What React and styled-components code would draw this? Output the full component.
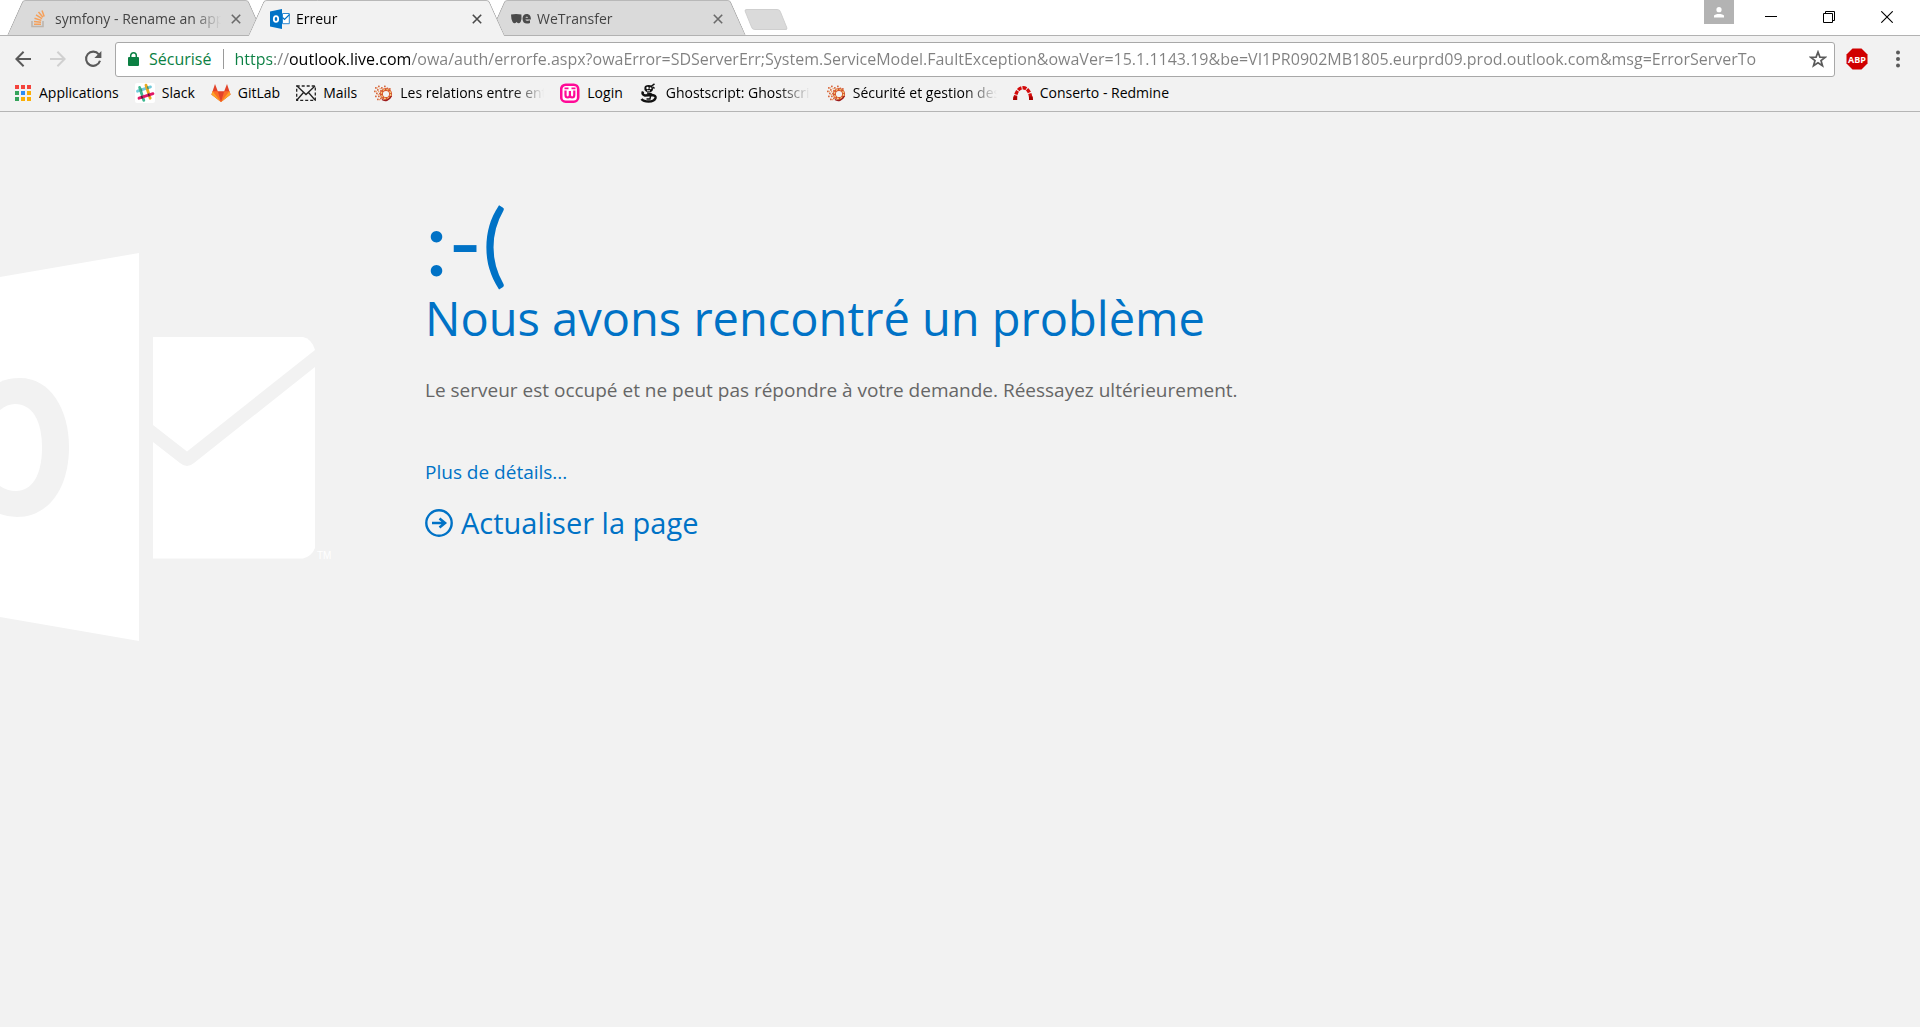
import React from "react";
import styled, { createGlobalStyle, css } from "styled-components";

const GlobalStyle = createGlobalStyle`
  *, *::before, *::after { box-sizing: border-box; }
  body {
    margin: 0;
    background: #f2f2f2;
    font-family: "Open Sans", "Noto Sans", sans-serif;
    color: #000;
  }
  button { font: inherit; color: inherit; border: 0; padding: 0; background: none; }
  svg { display: block; flex: none; }
`;

const Window = styled.div`
  display: flex;
  flex-direction: column;
  min-height: 100vh;
`;

/* ---------- Tab strip ---------- */

const TabStrip = styled.header`
  display: flex;
  align-items: flex-start;
  height: 36px;
  padding-left: 7px;
  background: #fff;
  border-bottom: 1px solid #b2b2b2;
`;

const TabList = styled.div`
  display: flex;
  flex: 1;
  min-width: 0;
`;

const tabSide = css`
  content: "";
  position: absolute;
  top: 0;
  bottom: 0;
  z-index: -1;
  background: ${(p) => (p.$active ? "#f2f2f2" : "#dadada")};
  border-top: 1px solid #b8b8b8;
`;

const Tab = styled.div`
  position: relative;
  z-index: ${(p) => (p.$active ? 2 : 1)};
  isolation: isolate;
  display: flex;
  align-items: center;
  flex: 0 1 257px;
  min-width: 0;
  height: ${(p) => (p.$active ? 36 : 35)}px;
  margin-right: -16px;
  padding: 2px 23px 0 22px;
  color: ${(p) => (p.$active ? "#000" : "#444")};

  &::before {
    ${tabSide}
    left: 8px;
    right: 30%;
    border-left: 1px solid #a6a6a6;
    border-top-left-radius: 3px;
    transform: skewX(-24deg);
  }
  &::after {
    ${tabSide}
    left: 30%;
    right: 8px;
    border-right: 1px solid #a6a6a6;
    border-top-right-radius: 3px;
    transform: skewX(24deg);
  }
`;

const TabTitle = styled.span`
  flex: 1;
  min-width: 0;
  margin: 0 10px 0 6px;
  overflow: hidden;
  white-space: nowrap;
  font-size: 14px;
  line-height: 20px;
  mask-image: linear-gradient(to right, #000 calc(100% - 28px), transparent);
`;

const TabClose = styled.button`
  display: grid;
  place-items: center;
  width: 10px;
  height: 20px;
  color: ${(p) => (p.$active ? "#4a4a4a" : "#6a6a6a")};
`;

const NewTab = styled.button`
  flex: none;
  width: 36px;
  height: 21px;
  margin: 9px 0 0 18px;
  background: #dadada;
  border: 1px solid #cfcfcf;
  border-radius: 3px;
  transform: skewX(22deg);
`;

const WindowControls = styled.div`
  display: flex;
  align-items: flex-start;
  padding-right: 4px;
`;

const ProfileButton = styled.button`
  display: grid;
  place-items: center;
  width: 30px;
  height: 24px;
  margin-right: 8px;
  background: #b3b3b3;
`;

const WindowButton = styled.button`
  display: grid;
  place-items: center;
  width: 58px;
  height: 34px;
`;

/* ---------- Toolbar ---------- */

const Toolbar = styled.nav`
  display: flex;
  align-items: center;
  height: 45px;
  padding: 1px 11px 0 12px;
`;

const ToolButton = styled.button`
  display: grid;
  place-items: center;
  width: 22px;
  height: 28px;
  margin-left: ${(p) => p.$before || 0}px;
`;

const AddressBar = styled.div`
  display: flex;
  align-items: center;
  flex: 1;
  min-width: 0;
  height: 35px;
  margin: 0 11px;
  padding: 0 5px 0 12px;
  background: #fff;
  border: 1px solid #a8a8a8;
  border-radius: 3px;
`;

const Security = styled.label`
  margin: 0 10px;
  font-size: 16px;
  line-height: 24px;
  color: #0b8043;
`;

const Divider = styled.span`
  width: 1px;
  height: 20px;
  margin: 0 10px 0 2px;
  background: #9a9a9a;
`;

/* scheme in green, host in black, the rest in grey */
const AddressInput = styled.input`
  flex: 1;
  min-width: 0;
  height: 30px;
  margin-right: 10px;
  padding: 0;
  border: 0;
  outline: 0;
  font: inherit;
  font-size: 16px;
  color: transparent;
  background: linear-gradient(
    to right,
    #0b8043 0 38px,
    #808080 38px 55px,
    #000 55px 177px,
    #808080 177px
  );
  background-clip: text;
  -webkit-background-clip: text;
`;

/* ---------- Bookmarks ---------- */

const BookmarkBar = styled.nav`
  display: flex;
  align-items: flex-start;
  gap: 16px;
  height: 31px;
  padding: 2px 12px 0;
  border-bottom: 1px solid #b5b5b5;
`;

const Bookmark = styled.a`
  display: flex;
  align-items: center;
  gap: 7px;
  color: #000;
  text-decoration: none;
  font-size: 14px;
  line-height: 20px;
`;

const BookmarkLabel = styled.span`
  overflow: hidden;
  white-space: nowrap;
  ${(p) =>
    p.$fade &&
    css`
      width: 144px;
      mask-image: linear-gradient(to right, #000 calc(100% - 32px), transparent);
    `}
`;

/* ---------- Error page ---------- */

const Page = styled.main`
  display: flex;
  flex: 1;
  align-items: flex-start;
  background: #f2f2f2;
`;

const LogoColumn = styled.div`
  flex: 0 0 425px;
  padding-top: 141px;
`;

const Message = styled.section`
  flex: 1;
  min-width: 0;
  padding-top: 82px;
`;

const Smiley = styled.div`
  font-family: Lato, "Open Sans", sans-serif;
  font-size: 92px;
  line-height: 94px;
  color: #0072c6;
`;

const Title = styled.h1`
  margin: 0;
  font-size: 47px;
  font-weight: 400;
  line-height: 60px;
  color: #0072c6;
`;

const Description = styled.p`
  margin: 28px 0 0;
  font-size: 19px;
  line-height: 28px;
  color: #666;
`;

const DetailsLink = styled.a`
  display: block;
  width: fit-content;
  margin-top: 54px;
  font-size: 19px;
  line-height: 28px;
  color: #0072c6;
  text-decoration: none;
`;

const RefreshLink = styled.a`
  display: flex;
  align-items: center;
  gap: 8px;
  width: fit-content;
  margin-top: 17px;
  font-size: 29px;
  line-height: 40px;
  color: #0072c6;
  text-decoration: none;
`;

/* ---------- Drawings ---------- */

const StackIcon = () => (
  <svg width="20" height="20" viewBox="0 0 20 20" fill="none">
    <path d="M3 12v5.500h11V12" stroke="#bcb4ad" strokeWidth="1.600" />
    <path
      d="M5 15.200h7M5 12.400l7 .9M5.500 9.200l6.800 2.200M7 5.800l6 3.800M9.500 3l4.400 5.200M13 1.500l2.200 6"
      stroke="#f5a05a"
      strokeWidth="1.500"
    />
  </svg>
);

const OutlookIcon = () => (
  <svg width="20" height="20" viewBox="0 0 20 20">
    <path d="M0 2.400L12 0v20L0 17.600z" fill="#0072c6" />
    <path d="M12.500 4.500h6.800v10.200h-6.800z" fill="#fff" stroke="#2a87d0" />
    <path d="M12.500 8.500l2 2 5-5" fill="none" stroke="#0072c6" strokeWidth="1.200" />
    <ellipse cx="6" cy="10" rx="2.200" ry="2.900" fill="none" stroke="#fff" strokeWidth="1.800" />
  </svg>
);

const WeIcon = () => (
  <svg width="20" height="20" viewBox="0 0 20 20" fill="#4a4a4a">
    <path d="M0 5.600Q5 4.600 10.400 5.600Q11 10 9.600 13Q7.600 15.400 5.600 13Q3.400 15.400 1.600 13Q0 10 0 5.600z" />
    <path d="M15.600 5c3 0 4.400 2.200 4.300 5.400h-5.500c.6 1.800 3 1.600 4.600 .9v2.600c-4 1.600-7.500 .2-7.500-4.200 0-2.800 1.700-4.700 4.100-4.700z" />
    <path d="M14.400 8.800h2.700c-.2-1.500-2.300-1.600-2.700 0z" fill="#dadada" />
  </svg>
);

const CloseIcon = () => (
  <svg width="10" height="10" viewBox="0 0 10 10" stroke="currentColor" strokeWidth="1.600">
    <path d="M.8 .8l8.400 8.400M9.200 .8L.8 9.200" />
  </svg>
);

const ProfileIcon = () => (
  <svg width="10" height="11" viewBox="0 0 10 11" fill="#fff">
    <circle cx="5" cy="2.700" r="2.600" />
    <path d="M0 10.500V8.600C1 6.400 9 6.400 10 8.600v1.900z" />
  </svg>
);

const MinimizeIcon = () => (
  <svg width="12" height="12" viewBox="0 0 12 12">
    <path d="M0 5.500h12" stroke="#000" />
  </svg>
);

const RestoreIcon = () => (
  <svg width="12" height="12" viewBox="0 0 12 12" fill="none" stroke="#000">
    <path d="M.5 2.500h9v9h-9zM2.500 2.500v-2h9v9h-2" />
  </svg>
);

const WindowCloseIcon = () => (
  <svg width="12" height="12" viewBox="0 0 12 12" stroke="#000" strokeWidth="1.100">
    <path d="M.3 .3l11.400 11.400M11.700 .3L.3 11.700" />
  </svg>
);

const ArrowIcon = ({ color, flip }) => (
  <svg width="16" height="16" viewBox="0 0 16 16" fill="none" stroke={color} strokeWidth="2">
    <path d={flip ? "M0 8h14.500M7.400 .8L14.600 8l-7.200 7.200" : "M16 8H1.500M8.600 .8L1.400 8l7.200 7.200"} />
  </svg>
);

const ReloadIcon = () => (
  <svg width="18" height="18" viewBox="0 0 18 18">
    <path d="M14.800 4.400A7.100 7.100 0 1 0 16 10.800" fill="none" stroke="#5a5a5a" strokeWidth="2.100" />
    <path d="M17.400 1v7h-7z" fill="#5a5a5a" />
  </svg>
);

const LockIcon = () => (
  <svg width="11" height="14" viewBox="0 0 11 14">
    <path d="M2.700 6V3.600a2.800 2.800 0 0 1 5.600 0V6" fill="none" stroke="#0b8043" strokeWidth="1.500" />
    <rect x="0" y="5" width="11" height="9" rx="1" fill="#0b8043" />
  </svg>
);

const StarIcon = () => (
  <svg width="18" height="18" viewBox="0 0 18 18">
    <path
      d="M9 2l1.900 5.100 5.400 .2-4.300 3.300 1.500 5.200L9 12.800l-4.500 3 1.500-5.200L1.700 7.300l5.400-.2z"
      fill="none"
      stroke="#5a5a5a"
      strokeWidth="1.700"
    />
  </svg>
);

const AdblockIcon = () => (
  <svg width="22" height="22" viewBox="0 0 22 22">
    <path d="M6.500 .5h9l6 6v9l-6 6h-9l-6-6v-9z" fill="#d00000" />
    <text x="11" y="14.500" textAnchor="middle" fontSize="9" fontWeight="700" fill="#fff" fontFamily="Open Sans, sans-serif">
      ABP
    </text>
  </svg>
);

const MenuIcon = () => (
  <svg width="4" height="18" viewBox="0 0 4 18" fill="#5a5a5a">
    <circle cx="2" cy="2.500" r="2" />
    <circle cx="2" cy="9" r="2" />
    <circle cx="2" cy="15.500" r="2" />
  </svg>
);

const appColors = ["#f4433c", "#f4433c", "#f4433c", "#34a35a", "#2d8cf5", "#fbae05", "#34a35a", "#fbae05", "#fbae05"];
const AppsIcon = () => (
  <svg width="20" height="20" viewBox="0 0 20 20">
    {appColors.map((fill, i) => (
      <rect key={i} x={3 + (i % 3) * 6} y={2 + Math.floor(i / 3) * 6} width="4" height="4" fill={fill} />
    ))}
  </svg>
);

const SlackIcon = () => (
  <svg width="20" height="20" viewBox="0 0 20 20" fill="none" strokeWidth="2.800" strokeLinecap="round">
    <rect width="20" height="20" rx="2" fill="#fff" />
    <path d="M2.500 8.200l13-4.300" stroke="#70cadb" />
    <path d="M11 2.200l4.200 13" stroke="#e9a820" />
    <path d="M4.600 4.400l4.200 13" stroke="#3eb890" />
    <path d="M4 15.200l14-4.500" stroke="#e01765" />
    <path d="M6.200 14.500l1.500-.5M13.200 12.200l1.300-.4" stroke="#4a1f35" strokeLinecap="butt" />
    <path d="M5.600 7.200l1.300-.4M12.200 5l1.200-.4" stroke="#3f8f70" strokeLinecap="butt" />
  </svg>
);

const GitlabIcon = () => (
  <svg width="20" height="20" viewBox="0 0 20 20">
    <path d="M10 19L.5 11.500 4 1l2.800 7.200h6.400L16 1l3.500 10.500z" fill="#e24329" />
    <path d="M10 19L6.800 8.200H1.600L.5 11.500zM10 19l3.200-10.800h5.200l1.100 3.300z" fill="#fc6d26" />
    <path d="M10 19L1.600 8.200.5 11.500zM10 19l8.400-10.800 1.100 3.300z" fill="#fca326" />
  </svg>
);

const MailsIcon = () => (
  <svg width="20" height="20" viewBox="0 0 20 20" fill="none" stroke="#222" strokeWidth="1.300">
    <rect x=".7" y="3" width="18.600" height="14.300" strokeDasharray="3 2" />
    <path d="M1 3l9 8.500L19 3M1 17l6.500-7.500M19 17l-6.500-7.500" />
  </svg>
);

const RingIcon = () => (
  <svg width="20" height="20" viewBox="0 0 20 20" fill="none">
    <circle cx="13" cy="11" r="4.600" stroke="#d5532c" strokeWidth="3" />
    <circle cx="13" cy="11" r="4.600" stroke="#f7cf7c" strokeWidth="1.200" strokeDasharray="2 1.600" />
    <path d="M9 16.500c3 2 7 1 9.500-3.500" stroke="#9c1c1c" strokeWidth="1.500" />
    <g fill="#d7683f">
      {[
        [2, 4], [5, 2.5], [8, 4], [11, 2.5], [13.500, 4.500], [1, 7.500], [4, 6], [7, 7],
        [3, 9.500], [6, 9.800], [2, 12.500], [5, 12.500], [4, 15.500], [7, 14.500], [16, 5],
      ].map(([x, y]) => (
        <rect key={`${x}-${y}`} x={x} y={y} width="1.700" height="1.700" rx=".5" />
      ))}
    </g>
    <g fill="#efa06a">
      {[[3.500, 4.300], [6.500, 5], [9.500, 5.500], [2.500, 7.800], [5, 8], [4.500, 11], [6, 16]].map(([x, y]) => (
        <rect key={`${x}-${y}`} x={x} y={y} width="1.300" height="1.300" />
      ))}
    </g>
  </svg>
);

const LoginIcon = () => (
  <svg width="20" height="20" viewBox="0 0 20 20" fill="none">
    <rect x="1.200" y="1.700" width="17" height="17" rx="4.500" fill="#fff" stroke="#ff0a97" strokeWidth="2.600" />
    <path d="M5.500 7.500v4.500q0 2.500 2.200 2.500t2.200-2.500V8v4q0 2.500 2.200 2.500t2.200-2.500V7.500" stroke="#ff0a97" strokeWidth="2.200" />
    <path d="M4.500 5.400h4M11.500 5.400h4" stroke="#ff0a97" strokeWidth="1.600" />
  </svg>
);

const GhostIcon = () => (
  <svg width="20" height="20" viewBox="0 0 20 20" fill="none">
    <path d="M6 3Q10 1 13.500 3.500 15 7.500 12 9 7 10 5.500 7 5 4.500 6 3z" fill="#111" />
    <path d="M12 3.500L15.500 .8M14 4l1.500 1.500" stroke="#111" strokeWidth="1.500" />
    <path d="M4 8.500Q2.500 11.500 6 12.500L13 12q4 .5 3.500 3-1 3.500-7 3.500-5 0-7-2.500" stroke="#111" strokeWidth="2.600" />
    <path d="M8 10l4 .5-1 5.500H7.500" stroke="#111" strokeWidth="1.400" />
    <circle cx="8.500" cy="5" r="1.200" fill="#fff" />
    <circle cx="11.500" cy="5.200" r="1" fill="#fff" />
    <path d="M8 7.800h3" stroke="#fff" />
  </svg>
);

const RedmineIcon = () => (
  <svg width="20" height="20" viewBox="0 0 20 20" fill="none">
    <path d="M2.200 16.500C2.500 .8 17.500 .8 17.800 16.500" stroke="#d40b0b" strokeWidth="3.400" strokeDasharray="4 1" />
    <path d="M.4 13.500h3.800v3.500H0zM16 13.500h3.800L20 17h-4z" fill="#a80000" />
  </svg>
);

const OutlookWatermark = () => (
  <svg width="332" height="388" viewBox="0 0 332 388" fill="#fff">
    <path d="M0 24L139 0v388L0 364z" />
    <path d="M0 129Q8 125 20 125C50 125 69 156 69 194 69 236 48 264 17 264Q8 264 0 261z" fill="#f2f2f2" />
    <path d="M0 157Q7 151 15 151C32 151 42 167 42 195 42 222 32 238 16 238Q7 238 0 233z" />
    <path d="M153 84h150q9 2 12 13L187 198.500l-34-26.500z" />
    <path d="M153 189l27 21q7 6 14 0l121-96v181q-3 8-12 10.500H153z" />
    <text x="317" y="306" fontSize="10" fontFamily="Liberation Sans, sans-serif">TM</text>
  </svg>
);

const CircleArrowIcon = () => (
  <svg width="28" height="28" viewBox="0 0 28 28" fill="none" stroke="#0072c6">
    <circle cx="14" cy="14" r="12.700" strokeWidth="2.400" />
    <path d="M7 14h12.500M14.500 9.500L20 14l-5.500 4.500" strokeWidth="2.600" />
  </svg>
);

/* ---------- Data ---------- */

const tabs = [
  { title: "symfony - Rename an app", Icon: StackIcon },
  { title: "Erreur", Icon: OutlookIcon, active: true },
  { title: "WeTransfer", Icon: WeIcon },
];

const bookmarks = [
  { label: "Applications", Icon: AppsIcon },
  { label: "Slack", Icon: SlackIcon },
  { label: "GitLab", Icon: GitlabIcon },
  { label: "Mails", Icon: MailsIcon },
  { label: "Les relations entre ent", Icon: RingIcon, fade: true },
  { label: "Login", Icon: LoginIcon },
  { label: "Ghostscript: Ghostscrip", Icon: GhostIcon, fade: true },
  { label: "Sécurité et gestion des", Icon: RingIcon, fade: true },
  { label: "Conserto - Redmine", Icon: RedmineIcon },
];

const url =
  "https://outlook.live.com/owa/auth/errorfe.aspx?owaError=SDServerErr;System.ServiceModel.FaultException&owaVer=15.1.1143.19&be=VI1PR0902MB1805.eurprd09.prod.outlook.com&msg=ErrorServerTo";

export default function App() {
  return (
    <Window>
      <GlobalStyle />
      <TabStrip>
        <TabList>
          {tabs.map(({ title, Icon, active }) => (
            <Tab key={title} $active={active}>
              <Icon />
              <TabTitle>{title}</TabTitle>
              <TabClose $active={active} aria-label={`Fermer ${title}`}>
                <CloseIcon />
              </TabClose>
            </Tab>
          ))}
          <NewTab aria-label="Nouvel onglet" />
        </TabList>
        <WindowControls>
          <ProfileButton aria-label="Profil"><ProfileIcon /></ProfileButton>
          <WindowButton aria-label="Réduire"><MinimizeIcon /></WindowButton>
          <WindowButton aria-label="Restaurer"><RestoreIcon /></WindowButton>
          <WindowButton aria-label="Fermer"><WindowCloseIcon /></WindowButton>
        </WindowControls>
      </TabStrip>

      <Toolbar>
        <ToolButton aria-label="Précédent"><ArrowIcon color="#5a5a5a" /></ToolButton>
        <ToolButton $before={13} aria-label="Suivant"><ArrowIcon color="#d0d0d0" flip /></ToolButton>
        <ToolButton $before={13} aria-label="Actualiser"><ReloadIcon /></ToolButton>
        <AddressBar>
          <LockIcon />
          <Security htmlFor="address">Sécurisé</Security>
          <Divider />
          <AddressInput id="address" type="text" defaultValue={url} spellCheck={false} />
          <ToolButton aria-label="Ajouter aux favoris"><StarIcon /></ToolButton>
        </AddressBar>
        <ToolButton aria-label="Adblock Plus"><AdblockIcon /></ToolButton>
        <ToolButton $before={19} aria-label="Menu"><MenuIcon /></ToolButton>
      </Toolbar>

      <BookmarkBar>
        {bookmarks.map(({ label, Icon, fade }) => (
          <Bookmark key={label} href="#">
            <Icon />
            <BookmarkLabel $fade={fade}>{label}</BookmarkLabel>
          </Bookmark>
        ))}
      </BookmarkBar>

      <Page>
        <LogoColumn>
          <OutlookWatermark />
        </LogoColumn>
        <Message>
          <Smiley>:-(</Smiley>
          <Title>Nous avons rencontré un problème</Title>
          <Description>
            Le serveur est occupé et ne peut pas répondre à votre demande. Réessayez ultérieurement.
          </Description>
          <DetailsLink href="#">Plus de détails...</DetailsLink>
          <RefreshLink href="#">
            <CircleArrowIcon />
            Actualiser la page
          </RefreshLink>
        </Message>
      </Page>
    </Window>
  );
}
